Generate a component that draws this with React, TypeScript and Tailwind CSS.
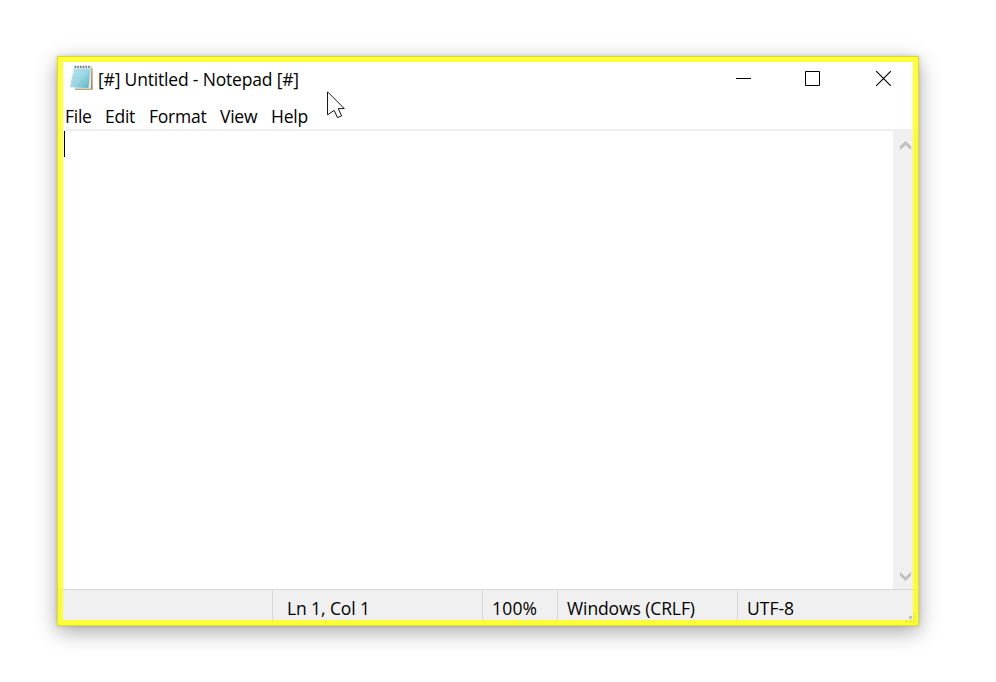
const menu = [
  { label: "File", cell: "w-[40px]" },
  { label: "Edit", cell: "w-[44px]" },
  { label: "Format", cell: "w-[71px]" },
  { label: "View", cell: "w-[51px]" },
  { label: "Help", cell: "w-[60px]" },
];

const status = [
  { label: "", cell: "w-[215px]" },
  { label: "Ln 1, Col 1", cell: "w-[210px] border-l pl-[14px] tracking-[-0.1px]" },
  { label: "100%", cell: "w-[75px] border-l pl-[9px] tracking-[0.2px]" },
  { label: "Windows (CRLF)", cell: "w-[180px] border-l pl-[9px] tracking-[-0.1px]" },
  { label: "UTF-8", cell: "flex-1 border-l pl-[9px]" },
];

function NotepadIcon() {
  return (
    <svg width="24" height="26" viewBox="0 0 24 26">
      <defs>
        <linearGradient id="page" x1="0" y1="0" x2="1" y2="1">
          <stop offset="0" stopColor="#c3e5ee" />
          <stop offset="0.5" stopColor="#9fd9e6" />
          <stop offset="1" stopColor="#55b1c4" />
        </linearGradient>
      </defs>
      <path d="M7 4L23.5 3L23.7 24.7L6 24.7Z" fill="#a08a66" />
      <path d="M6 3L22.4 2.5L22 23.7L5 23.8Z" fill="#eee8d8" />
      <path d="M5 2.3L21.6 2.3L19.4 23L1 22.3Z" fill="url(#page)" />
      <path d="M4.5 6H21M4.2 9H20.6M3.7 12H20.3M3.1 15H20M2.5 18H19.6" stroke="#7cc5d5" strokeWidth="0.5" opacity="0.4" />
      <path d="M5 2.5H22" stroke="#dfe5e5" strokeWidth="2" />
      <path d="M5.7 1.7H22.3" stroke="#59666b" strokeWidth="2" strokeDasharray="1.4 1.3" />
    </svg>
  );
}

function WindowControls() {
  return (
    <div className="ml-auto flex pt-[14px] pr-[28px]">
      <svg width="155" height="17" viewBox="0 0 155 17" fill="none" stroke="#000" strokeWidth="1">
        <path d="M0 8.5H15" />
        <path d="M69.5 1.5H83.5V15.5H69.5Z" />
        <path d="M140.2 1.2L154.8 15.8M154.8 1.2L140.2 15.8" strokeWidth="1.1" />
      </svg>
    </div>
  );
}

function ScrollArrow({ down = false }: { down?: boolean }) {
  return (
    <svg width="11" height="9" viewBox="0 0 11 9" className={down ? "rotate-180" : ""} fill="#bfbfbf">
      <path d="M0 5.3L5.5 0L11 5.3V9L5.5 4L0 9Z" />
    </svg>
  );
}

function SizeGrip() {
  return (
    <svg width="11" height="11" viewBox="0 0 11 11" fill="#bfbfbf" className="absolute right-[3px] bottom-[3px]">
      <path d="M8 0h3v3h-3zM4 4h3v3h-3zM8 4h3v3h-3zM0 8h3v3h-3zM4 8h3v3h-3zM8 8h3v3h-3z" />
    </svg>
  );
}

export default function App() {
  return (
    <div className="h-[682px] w-[996px] overflow-hidden bg-white pt-[56px] pl-[57px] font-['Open_Sans','Noto_Sans',sans-serif] text-[17.5px] leading-[24px] font-[370] text-black">
      <div className="relative flex h-[570px] w-[862px] flex-col bg-white shadow-[0_6px_20px_rgba(0,0,0,0.34),0_0_4px_rgba(0,0,0,0.14)]">
        <div className="flex h-[48px] pl-[12px]">
          <div className="pt-[9px]"><NotepadIcon /></div>
          <div className="pt-[11px] pl-[5px] tracking-[-0.18px] whitespace-nowrap">[#] Untitled - Notepad [#]</div>
          <WindowControls />
        </div>
        <div className="flex h-[25px] pl-[8px]">
          {menu.map((m) => (
            <div key={m.label} className={`${m.cell} tracking-[-0.25px] whitespace-nowrap`}>{m.label}</div>
          ))}
        </div>
        <div className="h-[2px] bg-[#f0f0f0]" />
        <div className="flex flex-1">
          <div className="flex-1 pl-[7px]">
            <div className="h-[26px] w-px bg-black" />
          </div>
          <div className="flex w-[26px] flex-col justify-between bg-[#f0f0f0] pt-[10px] pb-[8px] pl-[7px]">
            <ScrollArrow />
            <ScrollArrow down />
          </div>
        </div>
        <div className="h-[37px] border-t border-[#d7d7d7] bg-[#f0f0f0] pt-px pb-[3px]">
          <div className="flex h-full">
            {status.map((s, i) => (
              <div key={i} className={`${s.cell} border-[#d7d7d7] pt-[5px] whitespace-nowrap`}>{s.label}</div>
            ))}
          </div>
        </div>
        <SizeGrip />
        <div className="pointer-events-none absolute inset-0 border-[6px] border-[rgba(255,255,11,0.8)]" />
        <div className="pointer-events-none absolute inset-0 border border-[#dbdb28]" />
        <svg className="absolute top-[35px] left-[270px]" width="19" height="28" viewBox="0 0 19 28" fill="#fff" stroke="#15151f" strokeWidth="1">
          <path d="M0.5 0.8L17.3 17.6H11.2L14.7 24.8L10.5 26.6L7.2 19.4L0.5 23.8Z" />
        </svg>
      </div>
    </div>
  );
}
